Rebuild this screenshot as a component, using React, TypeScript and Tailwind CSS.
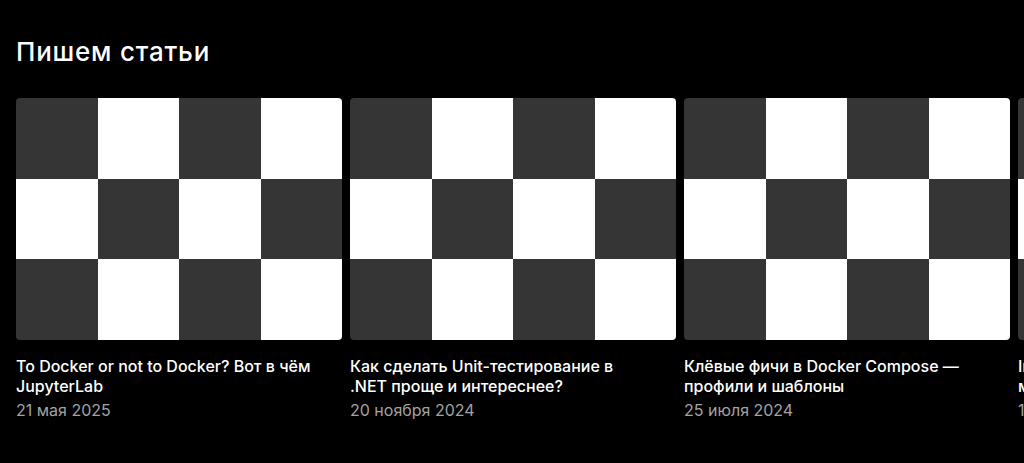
import React from "react";

const articles = [
  {
    title: "To Docker or not to Docker? Вот в чём JupyterLab",
    date: "21 мая 2025",
  },
  {
    title: "Как сделать Unit-тестирование в .NET проще и интереснее?",
    date: "20 ноября 2024",
  },
  {
    title: "Клёвые фичи в Docker Compose — профили и шаблоны",
    date: "25 июля 2024",
  },
  {
    title: "Integration-тесты и Testcontainers в мире .NET",
    date: "12 июня 2024",
  },
];

function Checker() {
  const cells = Array.from({ length: 12 }, (_, i) => {
    const row = Math.floor(i / 4);
    const col = i % 4;
    return (row + col) % 2 === 0;
  });
  return (
    <div className="grid grid-cols-4 grid-rows-3 h-[242px] w-full rounded overflow-hidden">
      {cells.map((dark, i) => (
        <div key={i} className={dark ? "bg-[#353535]" : "bg-white"} />
      ))}
    </div>
  );
}

export default function App() {
  return (
    <div
      className="min-h-[463px] w-full bg-black text-white overflow-hidden px-4 pt-9"
      style={{ fontFamily: "Inter, 'Noto Sans', sans-serif" }}
    >
      <h2 className="text-[26px] leading-8 font-medium tracking-[0.03em] mb-[30px]">
        Пишем статьи
      </h2>
      <div className="flex gap-2">
        {articles.map((a, i) => (
          <div key={i} className="w-[326px] shrink-0">
            <Checker />
            <p className="mt-4 text-[16px] leading-5 font-medium text-white pr-6">
              {a.title}
            </p>
            <p className="mt-1 text-[16px] leading-5 text-[#a3a3a3]">
              {a.date}
            </p>
          </div>
        ))}
      </div>
    </div>
  );
}
